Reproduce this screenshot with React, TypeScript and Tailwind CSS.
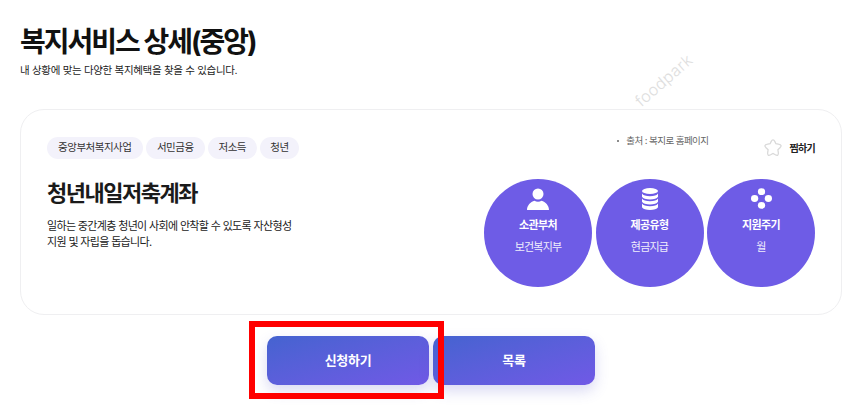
import React from "react";

function Circle({ icon, title, value }: { icon: React.ReactNode; title: string; value: string }) {
  return (
    <div className="w-[108px] h-[108px] rounded-full bg-[#6e5ce6] flex flex-col items-center text-white pt-[8px] shrink-0">
      <div className="h-[23px] flex items-center justify-center">{icon}</div>
      <div className="mt-[7px] text-[11px] font-bold leading-[16px] tracking-[-0.6px]">{title}</div>
      <div className="mt-[6px] text-[11px] leading-[16px] tracking-[-0.8px] text-[#f0eefc]">{value}</div>
    </div>
  );
}

const Tag = ({ t, w }: { t: string; w: string }) => (
  <span className={`${w} h-[22px] rounded-full bg-[#f3f2fb] text-[#333] text-[10.5px] tracking-[-0.5px] flex items-center justify-center`}>{t}</span>
);

export default function App() {
  return (
    <div className="relative w-[852px] h-[405px] overflow-hidden bg-white text-[#111] font-['Inter','Noto_Sans_CJK_KR',sans-serif] pl-[20px] pt-[25px]">
      <h1 className="text-[28px] leading-[34px] font-bold tracking-[-2px] text-[#111]">복지서비스 상세(중앙)</h1>
      <p className="mt-[4px] text-[10.5px] leading-[16px] tracking-[-0.32px] text-[#222]">내 상황에 맞는 다양한 복지혜택을 찾을 수 있습니다.</p>

      <div className="absolute left-[632px] top-[97px] origin-top-left -rotate-[41deg] text-[16px] leading-none font-light tracking-[0.4px] text-[#dedede] font-['Inter',sans-serif]">foodpark</div>

      <div className="mt-[30px] w-[822px] h-[206px] rounded-[24px] border border-[#efeff1] bg-white flex justify-between pl-[26px] pr-[26px] pt-[27px]">
        <div className="flex flex-col w-[300px]">
          <div className="flex gap-[3.5px]">
            <Tag t="중앙부처복지사업" w="w-[95.5px]" />
            <Tag t="서민금융" w="w-[58.5px]" />
            <Tag t="저소득" w="w-[48.5px]" />
            <Tag t="청년" w="w-[39px]" />
          </div>
          <h2 className="mt-[19px] text-[22px] leading-[30px] font-bold tracking-[-1.5px] text-[#1a1a1a]">청년내일저축계좌</h2>
          <p className="mt-[10px] text-[11px] leading-[16px] tracking-[-0.65px] text-[#222]">
            일하는 중간계층 청년이 사회에 안착할 수 있도록 자산형성<br />지원 및 자립을 돕습니다.
          </p>
        </div>
        <div className="flex flex-col items-end">
          <div className="flex items-start h-[42px]">
            <div className="flex items-center text-[9.5px] leading-[12px] tracking-[-0.55px] text-[#666] mr-[54px] mt-[-2px]">
              <span className="w-[2px] h-[2px] rounded-full bg-[#666] mr-[7px]"></span>출처 : 복지로 홈페이지
            </div>
            <div className="flex items-center mt-[1px]">
              <svg width="20" height="20" viewBox="0 0 20 20" className="mr-[7px]">
                <path d="M10 1.8c.9 0 1.4.8 1.9 1.8l1 2.1 2.4.4c1.3.2 2.6.5 2.8 1.500.2 1-.8 1.800-1.700 2.700l-1.500 1.500.4 2.500c.2 1.200.3 2.300-.5 2.800-.8.5-1.800 0-2.900-.6L10 15.400l-1.900 1.100c-1.100.6-2.100 1.100-2.900.6-.8-.5-.7-1.600-.5-2.800l.4-2.500-1.500-1.500C2.700 9.400 1.700 8.600 1.900 7.600c.2-1 1.500-1.300 2.800-1.500l2.400-.4 1-2.100c.5-1 1-1.800 1.900-1.800z" fill="#fff" stroke="#d9d9d9" strokeWidth="1.300" />
              </svg>
              <span className="text-[10px] font-bold tracking-[-0.7px] text-[#222]">찜하기</span>
            </div>
          </div>
          <div className="flex gap-[3.5px]">
            <Circle
              title="소관부처"
              value="보건복지부"
              icon={
                <svg width="22" height="22" viewBox="0 0 22 22" fill="#fff">
                  <circle cx="11" cy="6" r="5.500" />
                  <path d="M0 22c0-4.500 3.500-8 7.500-9.200 2 1.400 5 1.400 7 0 4 1.200 7.500 4.700 7.500 9.200z" />
                </svg>
              }
            />
            <Circle
              title="제공유형"
              value="현금지급"
              icon={
                <svg width="16" height="22" viewBox="0 0 16 22" fill="#fff">
                  <ellipse cx="8" cy="3" rx="8" ry="3" />
                  <path d="M0 5.500c1 1.800 4 2.800 8 2.800s7-1 8-2.800v3.200c-1 1.800-4 2.800-8 2.800s-7-1-8-2.800z" />
                  <path d="M0 10.500c1 1.800 4 2.800 8 2.800s7-1 8-2.800v3.200c-1 1.800-4 2.800-8 2.800s-7-1-8-2.800z" />
                  <path d="M0 15.500c1 1.800 4 2.800 8 2.800s7-1 8-2.800v3.700c-1 1.800-4 2.800-8 2.800s-7-1-8-2.800z" />
                </svg>
              }
            />
            <Circle
              title="지원주기"
              value="월"
              icon={
                <svg width="21" height="21" viewBox="0 0 22 22" fill="#fff">
                  <ellipse cx="11" cy="3.800" rx="3.800" ry="3.600" />
                  <ellipse cx="11" cy="18.200" rx="3.800" ry="3.600" />
                  <ellipse cx="3.800" cy="11" rx="3.800" ry="3.600" />
                  <ellipse cx="18.200" cy="11" rx="3.800" ry="3.600" />
                </svg>
              }
            />
          </div>
        </div>
      </div>

      <div className="mt-[21px] ml-[247px] flex gap-[4px]">
        <button className="w-[162px] h-[49px] rounded-[10px] bg-gradient-to-br from-[#4463d0] to-[#7059e6] text-white text-[13px] font-bold tracking-[-0.3px] shadow-[0_6px_14px_rgba(80,80,200,0.22)]">신청하기</button>
        <button className="w-[162px] h-[49px] rounded-[10px] bg-gradient-to-br from-[#4463d0] to-[#7059e6] text-white text-[13px] font-bold tracking-[-0.3px] shadow-[0_6px_14px_rgba(80,80,200,0.22)]">목록</button>
      </div>

      <div className="absolute left-[249px] top-[321px] w-[195px] h-[78px] border-[6px] border-[#ff0000] pointer-events-none"></div>
    </div>
  );
}
